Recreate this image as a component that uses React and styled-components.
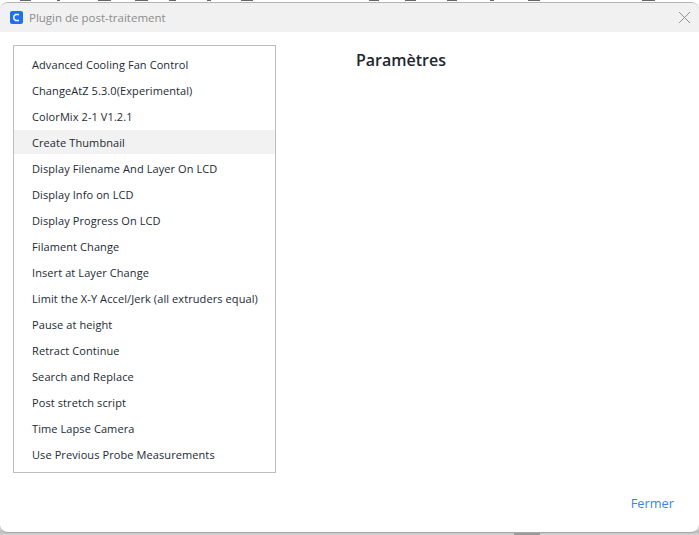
import React from "react";
import styled, { createGlobalStyle } from "styled-components";

const Global = createGlobalStyle`
  html, body { margin: 0; padding: 0; background: #fff; }
  body { font-family: "Open Sans", "Noto Sans", sans-serif; }
`;

const Page = styled.div`
  position: relative;
  width: 699px;
  height: 535px;
  overflow: hidden;
  box-sizing: border-box;
  padding-top: 2px;
  background: linear-gradient(to bottom, #fff 0, #fff 520px, #bdbdbd 532px, #d4d4d4 535px);
`;

const BackdropStrip = styled.svg`
  position: absolute;
  top: 0;
  left: 0;
`;

const BottomStrip = styled.svg`
  position: absolute;
  left: 0;
  bottom: 0;
`;

const Dialog = styled.div`
  position: relative;
  height: 531px;
  display: flex;
  flex-direction: column;
  background: #fff;
  border-radius: 8px;
  border-top: 1px solid #b5b5b5;
  border-bottom: 1px solid #a8a8a8;
  box-sizing: border-box;
  overflow: hidden;
`;

const TitleBar = styled.div`
  height: 29px;
  flex: none;
  display: flex;
  align-items: center;
  padding: 0 8px 0 10px;
  background: #f1f1f1;
`;

const TitleText = styled.span`
  margin-left: 6px;
  flex: 1;
  font-size: 11.5px;
  color: #8c8c8c;
`;

const Body = styled.div`
  flex: 1;
  display: flex;
  padding: 13px 13px 0;
  align-items: flex-start;
`;

const List = styled.ul`
  list-style: none;
  margin: 0;
  padding: 6px 0;
  width: 263px;
  height: 428px;
  box-sizing: border-box;
  flex: none;
  border: 1px solid #bdbdbd;
  display: flex;
  flex-direction: column;
  gap: 2px;
`;

const Row = styled.li`
  height: 24px;
  line-height: 25px;
  padding-left: 18px;
  font-size: 11px;
  letter-spacing: 0.09px;
  color: #222a33;
  white-space: nowrap;
  background: ${(p) => (p.$active ? "#f2f2f2" : "transparent")};
`;

const Panel = styled.section`
  flex: 1;
  padding-left: 80px;
`;

const Heading = styled.h2`
  margin: 4px 0 0;
  font-size: 16px;
  line-height: 22px;
  font-weight: 600;
  color: #1f2630;
`;

const Footer = styled.div`
  height: 60px;
  flex: none;
  display: flex;
  justify-content: flex-end;
  padding: 21px 25px 0 0;
  box-sizing: border-box;
`;

const CloseLink = styled.button`
  border: 0;
  padding: 0;
  background: none;
  font: inherit;
  font-size: 12.8px;
  line-height: 18px;
  height: 18px;
  color: #3d7ef0;
`;

const items = [
  "Advanced Cooling Fan Control",
  "ChangeAtZ 5.3.0(Experimental)",
  "ColorMix 2-1 V1.2.1",
  "Create Thumbnail",
  "Display Filename And Layer On LCD",
  "Display Info on LCD",
  "Display Progress On LCD",
  "Filament Change",
  "Insert at Layer Change",
  "Limit the X-Y Accel/Jerk (all extruders equal)",
  "Pause at height",
  "Retract Continue",
  "Search and Replace",
  "Post stretch script",
  "Time Lapse Camera",
  "Use Previous Probe Measurements",
];

const darkMarks = [
  [20, 11], [57, 3], [98, 13], [135, 13], [169, 7], [207, 4], [241, 12],
  [369, 10], [405, 11], [447, 10], [490, 4], [528, 12], [642, 13],
];

const Logo = () => (
  <svg width="13" height="13" viewBox="0 0 13 13">
    <rect x="0" y="0" width="13" height="13" rx="2" fill="#1f6ff2" />
    <path d="M9 3.4H5.6L3.9 5v3l1.7 1.6H9" fill="none" stroke="#fff" strokeWidth="1.5" />
  </svg>
);

const CloseIcon = () => (
  <svg width="13" height="13" viewBox="0 0 13 13">
    <path d="M1 1l11 11M12 1L1 12" stroke="#8f8f8f" strokeWidth="1" fill="none" />
  </svg>
);

export default function App() {
  return (
    <Page>
      <Global />
      <Dialog>
        <TitleBar>
          <Logo />
          <TitleText>Plugin de post-traitement</TitleText>
          <CloseIcon />
        </TitleBar>
        <Body>
          <List>
            {items.map((t) => (
              <Row key={t} $active={t === "Create Thumbnail"}>{t}</Row>
            ))}
          </List>
          <Panel>
            <Heading>Paramètres</Heading>
          </Panel>
        </Body>
        <Footer>
          <CloseLink>Fermer</CloseLink>
        </Footer>
      </Dialog>
      <BackdropStrip width="699" height="2" viewBox="0 0 699 2">
        {darkMarks.map(([x, w]) => (
          <rect key={x} x={x} y="0" width={w} height="1" fill="#666" />
        ))}
      </BackdropStrip>
      <BottomStrip width="699" height="2" viewBox="0 0 699 2">
        <rect x="514" y="0" width="26" height="2" fill="#9a9a9a" />
      </BottomStrip>
    </Page>
  );
}
